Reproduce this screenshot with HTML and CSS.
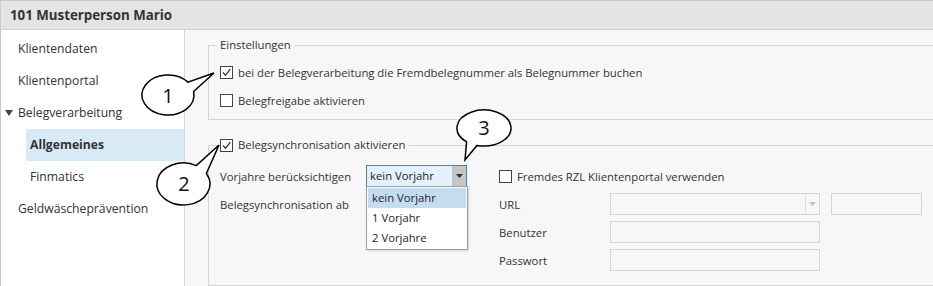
FILE: index.html
```html
<!DOCTYPE html>
<html lang="de">
<head>
<meta charset="utf-8">
<title>101 Musterperson Mario</title>
<link rel="stylesheet" href="styles.css">
</head>
<body>
<div class="window">
  <header class="titlebar">101 Musterperson Mario</header>
  <div class="main">
    <nav class="sidebar">
      <div class="nav-item">Klientendaten</div>
      <div class="nav-item">Klientenportal</div>
      <div class="nav-item nav-parent"><svg class="caret" width="8" height="6" viewBox="0 0 8 6"><path d="M0 0 H8 L4 6 Z" fill="#444"/></svg>Belegverarbeitung</div>
      <div class="nav-item nav-child selected">Allgemeines</div>
      <div class="nav-item nav-child">Finmatics</div>
      <div class="nav-item">Geldwäscheprävention</div>
    </nav>
    <section class="content">
      <fieldset class="group group-settings">
        <legend class="legend">Einstellungen</legend>
        <label class="check-row"><span class="cb"><svg width="11" height="11" viewBox="0 0 11 11"><path d="M2 5.5 L4.5 8.3 L9.3 2.2" fill="none" stroke="#333" stroke-width="1.3"/></svg></span>bei der Belegverarbeitung die Fremdbelegnummer als Belegnummer buchen</label>
        <label class="check-row row-gap"><span class="cb"></span>Belegfreigabe aktivieren</label>
      </fieldset>
      <fieldset class="group group-sync">
        <legend class="legend legend-check"><span class="cb"><svg width="11" height="11" viewBox="0 0 11 11"><path d="M2 5.5 L4.5 8.3 L9.3 2.2" fill="none" stroke="#333" stroke-width="1.3"/></svg></span>Belegsynchronisation aktivieren</legend>
        <div class="sync-grid">
          <span class="label">Vorjahre berücksichtigen</span>
          <div class="combo combo-active">
            <span class="combo-text">kein Vorjahr</span>
            <span class="combo-btn"><svg width="7" height="4" viewBox="0 0 7 4"><path d="M0 0 H7 L3.5 4 Z" fill="#333"/></svg></span>
            <ul class="dropdown">
              <li class="dd-item dd-selected">kein Vorjahr</li>
              <li class="dd-item">1 Vorjahr</li>
              <li class="dd-item">2 Vorjahre</li>
            </ul>
          </div>
          <span class="spacer"></span>
          <label class="check-row right-check"><span class="cb"></span>Fremdes RZL Klientenportal verwenden</label>

          <span class="label">Belegsynchronisation ab</span>
          <span class="spacer"></span>
          <span class="spacer"></span>
          <span class="label">URL</span>
          <div class="combo combo-disabled">
            <span class="combo-text"></span>
            <span class="combo-btn"><svg width="7" height="4" viewBox="0 0 7 4"><path d="M0 0 H7 L3.5 4 Z" fill="#c4c4c4"/></svg></span>
          </div>
          <span class="spacer"></span>
          <div class="field"></div>

          <span class="spacer"></span>
          <span class="spacer"></span>
          <span class="spacer"></span>
          <span class="label">Benutzer</span>
          <div class="field"></div>
          <span class="spacer"></span>
          <span class="spacer"></span>

          <span class="spacer"></span>
          <span class="spacer"></span>
          <span class="spacer"></span>
          <span class="label">Passwort</span>
          <div class="field"></div>
        </div>
      </fieldset>
    </section>
  </div>
  <svg class="callouts" width="933" height="286" viewBox="0 0 933 286">
    <g fill="#fff" stroke="#000" stroke-width="1.5" stroke-linejoin="miter">
      <path d="M193.6 91.5 A26 20 0 1 1 187.9 82.1 L214 73 Z"/>
      <path d="M206.4 173.5 A26.5 21 0 1 1 196.3 165.6 L219 145 Z"/>
      <path d="M466.6 141.8 A27 18 0 1 1 477 145.4 L465 160 Z"/>
    </g>
    <g class="callout-num" text-anchor="middle">
      <text x="168" y="103">1</text>
      <text x="184" y="191">2</text>
      <text x="484" y="135">3</text>
    </g>
  </svg>
</div>
</body>
</html>
```

FILE: styles.css
```css
* { box-sizing: border-box; }

body {
  margin: 0;
  font-family: "Open Sans", "Noto Sans", sans-serif;
  color: #333;
  background: #fff;
}

.window {
  position: relative;
  width: 933px;
  height: 286px;
  overflow: hidden;
  display: flex;
  flex-direction: column;
  border-top: 1px solid #c9c9c9;
  border-left: 1px solid #c9c9c9;
  background: #f7f7f7;
}

.titlebar {
  height: 29px;
  flex: none;
  background: #e4e4e4;
  border-bottom: 1px solid #cfcfcf;
  padding-left: 9px;
  font-size: 13.3px;
  font-weight: 700;
  line-height: 28px;
  color: #333;
}

.main {
  flex: 1;
  display: flex;
  min-height: 0;
}

.sidebar {
  width: 184px;
  flex: none;
  background: #fff;
  border-right: 1px solid #d8d8d8;
  padding-top: 3px;
}

.nav-item {
  height: 32px;
  line-height: 32px;
  padding-left: 17px;
  font-size: 12.2px;
  color: #333;
  white-space: nowrap;
}

.nav-parent {
  display: flex;
  align-items: center;
  padding-left: 4px;
}

.caret {
  margin-right: 5px;
}

.nav-child {
  margin-left: 25px;
  padding-left: 4px;
}

.selected {
  background: #d9eaf7;
  font-weight: 700;
}

.content {
  flex: 1;
  min-width: 0;
  padding: 7px 0 0 23px;
}

.group {
  margin: 0 -40px 0 0;
  min-width: 0;
  border: 1px solid #d5d5d5;
  padding: 9px 0 9px 11px;
}

.legend {
  font-size: 11.3px;
  line-height: 16px;
  padding: 0 3px;
  margin-left: -3px;
  color: #333;
}

.legend-check {
  display: flex;
  align-items: center;
  gap: 5px;
}

.group-sync {
  margin-top: 17px;
  padding-top: 12px;
  padding-bottom: 14px;
}

.check-row {
  display: flex;
  align-items: center;
  gap: 5px;
  height: 20px;
  font-size: 11.3px;
  color: #333;
  white-space: nowrap;
}

.row-gap {
  margin-top: 8px;
}

.cb {
  width: 13px;
  height: 13px;
  flex: none;
  border: 1px solid #444;
  background: #fff;
  display: flex;
  align-items: center;
  justify-content: center;
}

.sync-grid {
  display: grid;
  grid-template-columns: 146px 101px 32px 111px 210px 11px 91px;
  grid-auto-rows: 22px;
  row-gap: 6px;
  align-items: center;
  font-size: 11.3px;
}

.label {
  white-space: nowrap;
  color: #333;
}

.right-check {
  grid-column: 4 / 8;
}

.combo {
  position: relative;
  height: 22px;
  display: flex;
  align-items: stretch;
  border: 1px solid #d6d6d6;
}

.combo-active {
  border-color: #3d86c6;
  background: #e5f1fb;
}

.combo-text {
  flex: 1;
  padding-left: 3px;
  line-height: 20px;
  color: #222;
}

.combo-btn {
  width: 14px;
  display: flex;
  align-items: center;
  justify-content: center;
}

.combo-active .combo-btn {
  background: #c6c6c6;
}

.combo-disabled .combo-btn {
  border-left: 1px solid #dedede;
}

.dropdown {
  position: absolute;
  top: 20px;
  left: -1px;
  width: 102px;
  margin: 0;
  padding: 1px;
  list-style: none;
  background: #fff;
  border: 1px solid #a0a0a0;
  box-shadow: 1px 1px 2px rgba(0, 0, 0, 0.15);
  z-index: 2;
}

.dd-item {
  height: 20px;
  line-height: 20px;
  padding-left: 4px;
  color: #222;
}

.dd-selected {
  background: #c3dcf0;
}

.field {
  height: 22px;
  border: 1px solid #d6d6d6;
}

.callouts {
  position: absolute;
  left: -1px;
  top: -1px;
  pointer-events: none;
}

.callout-num {
  font-family: "Open Sans", sans-serif;
  font-size: 20px;
  fill: #111;
}
```
